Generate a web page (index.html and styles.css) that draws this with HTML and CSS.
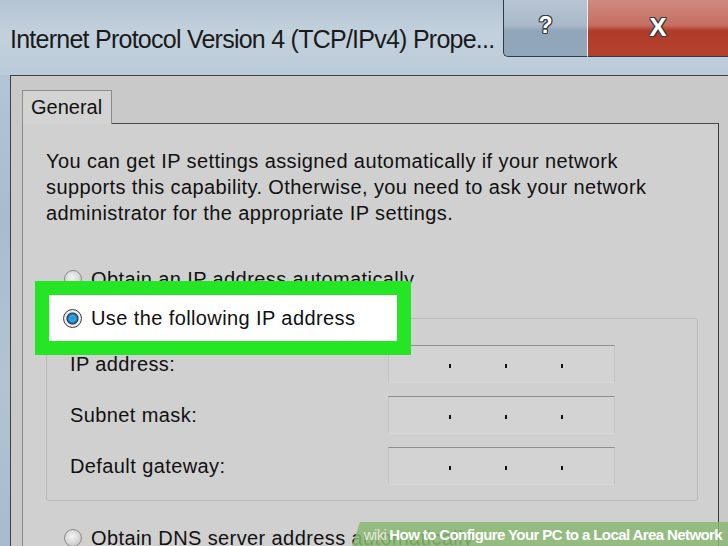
FILE: index.html
```html
<!DOCTYPE html>
<html lang="en">
<head>
    <meta charset="UTF-8">
    <meta name="viewport" content="width=device-width, initial-scale=1.0">
    <title>Internet Protocol Version 4 (TCP/IPv4) Properties</title>
    <link rel="stylesheet" href="styles.css">
</head>
<body>
    <div class="window">
        <div class="titlebar">
            <div class="title">Internet Protocol Version 4 (TCP/IPv4) Prope...</div>
            <div class="controls">
                <div class="btn help">?</div>
                <div class="btn close">X</div>
            </div>
        </div>

        <div class="dialog">
            <div class="tabs">
                <div class="tab">General</div>
            </div>

            <div class="panel">
                <p class="intro">You can get IP settings assigned automatically if your network<br>supports this capability. Otherwise, you need to ask your network<br>administrator for the appropriate IP settings.</p>

                <div class="option"><span class="radio"></span>Obtain an IP address automatically</div>

                <fieldset class="group">
                    <legend class="highlight"><span class="radio checked"></span>Use the following IP address</legend>
                    <div class="rows">
                        <div class="row">
                            <span class="label">IP address:</span>
                            <span class="ipbox"><i></i><i></i><i></i></span>
                        </div>
                        <div class="row">
                            <span class="label">Subnet mask:</span>
                            <span class="ipbox"><i></i><i></i><i></i></span>
                        </div>
                        <div class="row">
                            <span class="label">Default gateway:</span>
                            <span class="ipbox"><i></i><i></i><i></i></span>
                        </div>
                    </div>
                </fieldset>

                <div class="option dns"><span class="radio"></span>Obtain DNS server address automatically</div>
            </div>
        </div>
    </div>

    <div class="watermark"><span class="wiki">wiki</span>How to Configure Your PC to a Local Area Network</div>
</body>
</html>
```

FILE: styles.css
```css
html, body {
    margin: 0;
    padding: 0;
}
body {
    width: 728px;
    height: 546px;
    overflow: hidden;
    position: relative;
    background: linear-gradient(to bottom, #b9c9d8 0%, #a9bccd 40%, #b3c3d2 70%, #a8bbcc 100%);
    font-family: "Liberation Sans", Arial, sans-serif;
    color: #111;
}
.window {
    display: flex;
    flex-direction: column;
    height: 546px;
    overflow: hidden;
}

/* title bar */
.titlebar {
    height: 75px;
    flex: none;
    display: flex;
    justify-content: space-between;
    background: linear-gradient(to bottom, #b4c4d3 0%, #c3d1de 45%, #bccbd9 100%);
}
.title {
    padding: 25px 0 0 10px;
    font-size: 25px;
    letter-spacing: -0.75px;
    line-height: 29px;
    color: #1a1a1a;
    white-space: nowrap;
}
.controls {
    display: flex;
    height: 57px;
}
.btn {
    height: 57px;
    box-sizing: border-box;
    display: flex;
    justify-content: center;
    align-items: center;
    color: #fff;
    font-weight: bold;
    border-bottom: 1px solid #2e3b48;
    text-shadow: 1px 0 #3b3b3b, -1px 0 #3b3b3b, 0 1px #3b3b3b, 0 -1px #3b3b3b, 1px 1px #3b3b3b, -1px -1px #3b3b3b, 1px -1px #3b3b3b, -1px 1px #3b3b3b;
}
.help {
    width: 85px;
    font-size: 23px;
    padding-bottom: 6px;
    border-left: 1px solid #2e3b48;
    border-right: 1px solid #e6edf3;
    border-bottom-left-radius: 5px;
    background: linear-gradient(to bottom, #b7c5d3 0%, #a9b9c9 45%, #91a5b9 55%, #93a7bb 100%);
}
.close {
    width: 140px;
    font-size: 26px;
    padding-bottom: 1px;
    background: linear-gradient(to bottom, #cf8a80 0%, #c66e62 45%, #b13b29 55%, #b4412f 100%);
}

/* dialog body */
.dialog {
    flex: 1;
    min-height: 0;
    overflow: hidden;
    margin-left: 10px;
    padding: 14px 0 0 11px;
    border-top: 1px solid #3d4247;
    border-left: 1px solid #3d4247;
    background: #c9c9c9;
}
.tabs {
    display: flex;
}
.tab {
    position: relative;
    z-index: 1;
    height: 33px;
    padding: 0 9px 0 8px;
    margin-bottom: -1px;
    line-height: 32px;
    font-size: 20px;
    border: 1px solid #8c8c8c;
    border-bottom: none;
    background: #d3d3d3;
}
.panel {
    min-height: 440px;
    margin-right: 9px;
    padding: 24px 20px 0 23px;
    border: 1px solid #8a8a8a;
    border-top-color: #4a4a4a;
    border-right-color: #3a3a3a;
    background: #d0d0d0;
    font-size: 20px;
    line-height: 26px;
    letter-spacing: 0.4px;
}
.intro {
    margin: 0;
}

/* radio options */
.option {
    display: flex;
    align-items: center;
    margin-top: 40px;
    padding-left: 18px;
    white-space: nowrap;
}
.option.dns {
    margin-top: 24px;
}
.radio {
    width: 16px;
    height: 16px;
    margin-right: 9px;
    border-radius: 50%;
    border: 1px solid #8b8b8b;
    background: radial-gradient(circle at 45% 40%, #f4f4f4 0%, #d6d6d6 55%, #bcbcbc 100%);
    flex: none;
}
.radio.checked {
    border-color: #3f3f3f;
    background: radial-gradient(circle, #1f8bd0 0, #3aa6e2 3px, #0f5d93 5px, #2a2a2a 5.5px, #efefef 6.5px, #d4d4d4 100%);
}

/* group box with highlighted legend */
.group {
    margin: -11px 0 0 0;
    padding: 0 0 15px 23px;
    border: 1px solid #bcbcbc;
    border-radius: 3px;
    min-width: 0;
}
.highlight {
    position: relative;
    display: flex;
    align-items: center;
    width: 348px;
    height: 46px;
    box-sizing: content-box;
    margin-left: -35px;
    padding: 0;
    border: 14px solid #24e624;
    background: #fff;
    white-space: nowrap;
}
.highlight .radio {
    margin-left: 14px;
    width: 17px;
    height: 17px;
}
.rows {
    display: flex;
    flex-direction: column;
    gap: 13px;
    margin-top: -10px;
}
.row {
    display: flex;
    align-items: center;
    height: 38px;
}
.label {
    width: 318px;
    flex: none;
}
.ipbox {
    width: 227px;
    height: 38px;
    box-sizing: border-box;
    display: flex;
    align-items: center;
    gap: 54px;
    padding: 4px 0 0 60px;
    border: 1px solid #c4c4c4;
    border-top-color: #8f8f8f;
    border-bottom-color: #d8d8d8;
    background: #d3d3d3;
}
.ipbox i {
    width: 2px;
    height: 4px;
    background: #111;
}

/* caption overlay */
.watermark {
    position: absolute;
    right: 0;
    bottom: 0;
    width: 376px;
    height: 24px;
    padding-right: 6px;
    box-sizing: border-box;
    display: flex;
    justify-content: flex-end;
    align-items: center;
    clip-path: polygon(8px 0, 100% 0, 100% 100%, 0 100%);
    background: rgba(138, 184, 115, 0.85);
    color: #fff;
    font-weight: bold;
    font-size: 15px;
    letter-spacing: -0.6px;
    white-space: nowrap;
}
.wiki {
    font-weight: normal;
    color: #e3ecd9;
    margin-right: 3px;
}
```
